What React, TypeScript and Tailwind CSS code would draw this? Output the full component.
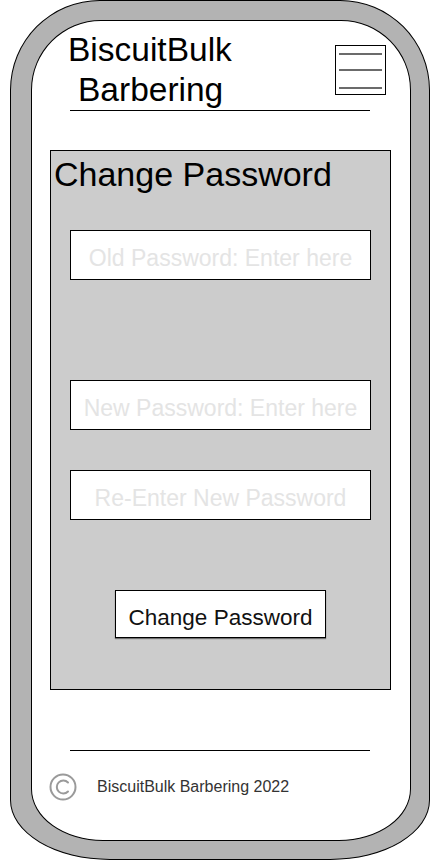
import { useState } from "react"

export default function App() {
  const [oldPw, setOldPw] = useState("")
  const [newPw, setNewPw] = useState("")
  const [confirmPw, setConfirmPw] = useState("")

  return (
    <div className="w-[431px] h-[861px] bg-white font-['Liberation_Sans',Arial,sans-serif]">
      {/* Phone frame */}
      <div className="ml-[10px] w-[420px] h-[860px] bg-[#b3b3b3] border border-black rounded-[90px_90px_100px_100px/90px_90px_60px_60px] pt-[19px] pl-[20px]">
        <div className="w-[380px] h-[821px] bg-white border border-black rounded-[70px_70px_72px_72px/70px_70px_52px_52px] pt-[9px]">
          {/* Header */}
          <div className="flex justify-between items-start ml-[36px] mr-[24px]">
            <div className="text-[33.5px] leading-[40px] text-black">
              <div>BiscuitBulk</div>
              <div className="pl-[10px]">Barbering</div>
            </div>
            <button className="mt-[15px] w-[51px] h-[50px] border border-black bg-white flex flex-col px-[3px] pt-[7px]">
              <span className="h-[2px] w-full bg-[#6b6b6b]" />
              <span className="h-[2px] w-full bg-[#6b6b6b] mt-[14px]" />
              <span className="h-[2px] w-full bg-[#6b6b6b] mt-[16px]" />
            </button>
          </div>
          <div className="ml-[38px] w-[300px] h-px bg-black" />

          {/* Change password panel */}
          <div className="mt-[39px] ml-[18px] w-[341px] h-[540px] bg-[#cccccc] border border-black">
            <h1 className="text-[34px] leading-[40px] text-black pl-[3px] pt-[3px]">Change Password</h1>
            <div className="ml-[19px] w-[301px]">
              <input
                type="password"
                value={oldPw}
                onChange={(e) => setOldPw(e.target.value)}
                placeholder="Old Password: Enter here"
                className="mt-[36px] w-full h-[50px] pt-[7px] bg-white border border-black text-center text-[23px] outline-none placeholder:text-[#e4e4e4]"
              />
              <input
                type="password"
                value={newPw}
                onChange={(e) => setNewPw(e.target.value)}
                placeholder="New Password: Enter here"
                className="mt-[100px] w-full h-[50px] pt-[7px] bg-white border border-black text-center text-[23px] outline-none placeholder:text-[#e4e4e4]"
              />
              <input
                type="password"
                value={confirmPw}
                onChange={(e) => setConfirmPw(e.target.value)}
                placeholder="Re-Enter New Password"
                className="mt-[40px] w-full h-[50px] pt-[7px] bg-white border border-black text-center text-[23px] outline-none placeholder:text-[#e4e4e4]"
              />
            </div>
            <div className="flex justify-center mt-[70px]">
              <button className="w-[211px] h-[48px] pt-[7px] bg-white border border-black shadow-[0_1px_1px_rgba(0,0,0,0.45)] text-[22.5px] text-[#111111]">
                Change Password
              </button>
            </div>
          </div>

          {/* Footer */}
          <div className="mt-[60px] ml-[38px] w-[300px] h-px bg-black" />
          <div className="flex items-center mt-[22px] ml-[17px]">
            <svg width="28" height="28" viewBox="0 0 28 28" fill="none">
              <circle cx="14" cy="14" r="12.5" stroke="#9a9a9a" strokeWidth="2" />
              <path d="M19 9.5 A6.5 6.5 0 1 0 19 18.5" stroke="#9a9a9a" strokeWidth="2" strokeLinecap="round" />
            </svg>
            <span className="ml-[20px] text-[16px] text-[#333333]">BiscuitBulk Barbering 2022</span>
          </div>
        </div>
      </div>
    </div>
  )
}
